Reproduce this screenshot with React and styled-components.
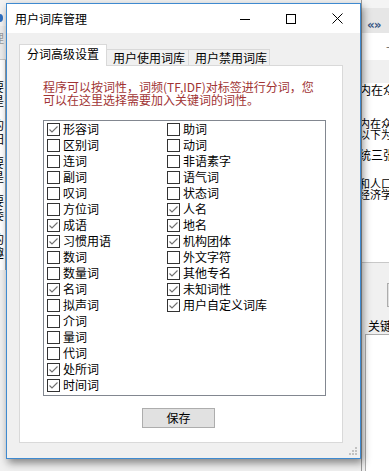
import React from "react";
import styled, { createGlobalStyle } from "styled-components";

const Global = createGlobalStyle`
  html, body { margin: 0; padding: 0; background: #f0f0f0; }
  body { font-family: "Noto Sans CJK SC", "Liberation Sans", sans-serif; font-size: 12px; color: #000; }
`;

const FONT = `"Noto Sans CJK SC", "Liberation Sans", sans-serif`;

const Desktop = styled.div`
  width: 389px;
  height: 471px;
  display: flex;
  overflow: hidden;
  background: #f0f0f0;
  font-family: ${FONT};
`;

/* ---------- background app strips ---------- */
const LeftStrip = styled.div`
  width: 6px;
  flex: none;
  display: flex;
  flex-direction: column;
  overflow: hidden;
`;

const StripBand = styled.div`
  height: ${(p) => p.h}px;
  flex: none;
  background: ${(p) => p.bg || "#f0f0f0"};
  border-bottom: ${(p) => (p.line ? "1px solid #c8c8c8" : "none")};
  border-right: ${(p) => (p.rline ? "1px solid #a0a0a0" : "none")};
  box-sizing: border-box;
  display: flex;
  flex-direction: column;
  overflow: hidden;
`;

const BlueDot = styled.span`
  display: block;
  width: 6px;
  height: 8px;
  margin: 14px 0 0 -3px;
  border-radius: 50%;
  background: #2f6fc0;
`;

const ClipText = styled.span`
  display: block;
  white-space: nowrap;
  font-size: ${(p) => p.fs || 12}px;
  line-height: ${(p) => p.lh || 13}px;
  color: ${(p) => p.color || "#000"};
  margin-left: ${(p) => p.ml || 0}px;
  margin-top: ${(p) => p.mt || 0}px;
`;

const RightStrip = styled.div`
  flex: 1;
  min-width: 0;
  display: flex;
  flex-direction: column;
  overflow: hidden;
  border-left: 1px solid #9a9a9a;
`;

const HeaderIcon = styled.span`
  display: block;
  margin: 11px 0 0 5px;
  font-family: "DejaVu Sans", sans-serif;
  font-size: 12px;
  line-height: 12px;
  font-weight: bold;
  color: #3c5a86;
  letter-spacing: -1px;
`;

const EdgeBox = styled.div`
  height: ${(p) => p.h}px;
  margin: ${(p) => p.m};
  border: 1px solid #adadad;
  border-right: none;
  background: ${(p) => p.bg || "#fff"};
  flex: none;
`;

/* ---------- dialog ---------- */
const Dialog = styled.div`
  position: relative;
  z-index: 1;
  flex: none;
  width: 355px;
  height: 456px;
  margin-top: 3px;
  box-sizing: border-box;
  border: 1px solid #3f8ad0;
  background: #f0f0f0;
  display: flex;
  flex-direction: column;
  box-shadow: 2px 4px 8px rgba(0, 0, 0, 0.45);
`;

const TitleBar = styled.div`
  height: 29px;
  flex: none;
  background: #fff;
  display: flex;
  align-items: center;
`;

const Title = styled.span`
  flex: 1;
  padding-left: 8px;
  font-size: 12px;
  line-height: 14px;
  margin-top: 1px;
`;

const CaptionButton = styled.span`
  width: 46px;
  height: 29px;
  display: flex;
  align-items: center;
  justify-content: center;
`;

const Client = styled.div`
  flex: 1;
  display: flex;
  flex-direction: column;
  padding: 12px 17px 15px 12px;
  min-height: 0;
`;

const TabRow = styled.div`
  display: flex;
  align-items: flex-end;
  height: 21px;
  flex: none;
  position: relative;
  z-index: 1;
  margin-bottom: -1px;
`;

const Tab = styled.div`
  box-sizing: border-box;
  height: ${(p) => (p.active ? 22 : 17)}px;
  width: ${(p) => p.w}px;
  background: ${(p) => (p.active ? "#fff" : "#f0f0f0")};
  border: 1px solid #d9d9d9;
  border-bottom: ${(p) => (p.active ? "none" : "1px solid #d9d9d9")};
  border-left: ${(p) => (p.first || p.active ? "1px solid #d9d9d9" : "none")};
  display: flex;
  align-items: ${(p) => (p.active ? "flex-start" : "center")};
  padding-left: ${(p) => (p.active ? 7 : 6)}px;
  padding-top: ${(p) => (p.active ? 2 : 0)}px;
  font-size: 12px;
  line-height: 14px;
  white-space: nowrap;
`;

const Panel = styled.div`
  flex: 1;
  background: #fff;
  border: 1px solid #d9d9d9;
  padding: 14px 0 0 23px;
  display: flex;
  flex-direction: column;
  align-items: flex-start;
`;

const Hint = styled.p`
  margin: 0;
  font-size: 12px;
  line-height: 13px;
  color: #a13434;
  white-space: nowrap;
`;

const ListBox = styled.div`
  margin-top: 14px;
  width: 283px;
  height: 276px;
  box-sizing: border-box;
  border: 1px solid #828790;
  background: #fff;
  display: flex;
  padding: 0 0 0 3px;
`;

const Column = styled.div`
  width: 120px;
  display: flex;
  flex-direction: column;
`;

const Row = styled.label`
  height: 16px;
  display: flex;
  align-items: center;
  gap: 3px;
  font-size: 12px;
  line-height: 16px;
  white-space: nowrap;
`;

const Box = styled.span`
  width: 13px;
  height: 13px;
  box-sizing: border-box;
  border: 1px solid #333;
  background: #fff;
  flex: none;
  display: flex;
`;

const SaveButton = styled.button`
  margin: 12px 0 0 99px;
  width: 73px;
  height: 20px;
  box-sizing: border-box;
  border: 1px solid #adadad;
  background: #e1e1e1;
  font-family: ${FONT};
  font-size: 12px;
  line-height: 14px;
  padding: 0;
  color: #000;
`;

const Grip = styled.svg`
  position: absolute;
  right: 3px;
  bottom: 3px;
`;

const leftItems = [
  ["形容词", true],
  ["区别词", false],
  ["连词", false],
  ["副词", false],
  ["叹词", false],
  ["方位词", false],
  ["成语", true],
  ["习惯用语", true],
  ["数词", false],
  ["数量词", false],
  ["名词", true],
  ["拟声词", false],
  ["介词", false],
  ["量词", false],
  ["代词", false],
  ["处所词", true],
  ["时间词", true],
];

const rightItems = [
  ["助词", false],
  ["动词", false],
  ["非语素字", false],
  ["语气词", false],
  ["状态词", false],
  ["人名", true],
  ["地名", true],
  ["机构团体", true],
  ["外文字符", false],
  ["其他专名", true],
  ["未知词性", true],
  ["用户自定义词库", true],
];

function Check({ label, checked }) {
  return (
    <Row>
      <Box>
        {checked && (
          <svg width="11" height="11" viewBox="0 0 11 11">
            <polyline points="1.5,5.5 4,8 9.5,2.5" fill="none" stroke="#6f6f6f" strokeWidth="1.1" />
          </svg>
        )}
      </Box>
      <span>{label}</span>
    </Row>
  );
}

export default function App() {
  return (
    <>
      <Global />
      <Desktop>
        <LeftStrip>
          <StripBand h={26} bg="#f2f2f2">
            <BlueDot />
          </StripBand>
          <StripBand h={34} bg="#ececec" line>
            <ClipText color="#9a9a9a" ml={-8} mt={5}>理</ClipText>
          </StripBand>
          <StripBand h={210} bg="#fff" rline>
            <ClipText ml={-8} mt={20} lh={14}>要</ClipText>
            <ClipText ml={-8} lh={14}>是</ClipText>
            <ClipText ml={-8} mt={10} lh={14}>的</ClipText>
            <ClipText ml={-8} lh={14}>阳</ClipText>
            <ClipText ml={-8} mt={10} lh={14}>要</ClipText>
            <ClipText ml={-8} lh={14}>是</ClipText>
            <ClipText ml={-8} mt={10} lh={14}>要</ClipText>
            <ClipText ml={-8} lh={14}>委</ClipText>
            <ClipText ml={-8} mt={10} lh={14}>的</ClipText>
            <ClipText ml={-8} lh={14}>趣</ClipText>
          </StripBand>
          <StripBand h={201} bg="#f0f0f0" />
        </LeftStrip>

        <Dialog>
          <TitleBar>
            <Title>用户词库管理</Title>
            <CaptionButton>
              <svg width="10" height="10" viewBox="0 0 10 10">
                <line x1="0" y1="5.5" x2="10" y2="5.5" stroke="#000" strokeWidth="1" />
              </svg>
            </CaptionButton>
            <CaptionButton>
              <svg width="10" height="10" viewBox="0 0 10 10">
                <rect x="0.5" y="0.5" width="9" height="9" fill="none" stroke="#000" strokeWidth="1" />
              </svg>
            </CaptionButton>
            <CaptionButton>
              <svg width="11" height="11" viewBox="0 0 11 11">
                <line x1="0.5" y1="0.5" x2="10.5" y2="10.5" stroke="#000" strokeWidth="1" />
                <line x1="10.5" y1="0.5" x2="0.5" y2="10.5" stroke="#000" strokeWidth="1" />
              </svg>
            </CaptionButton>
          </TitleBar>
          <Client>
            <TabRow>
              <Tab active first w={88}>分词高级设置</Tab>
              <Tab w={82}>用户使用词库</Tab>
              <Tab w={81}>用户禁用词库</Tab>
            </TabRow>
            <Panel>
              <Hint>程序可以按词性，词频(TF,IDF)对标签进行分词，您</Hint>
              <Hint>可以在这里选择需要加入关键词的词性。</Hint>
              <ListBox>
                <Column>
                  {leftItems.map(([l, c]) => (
                    <Check key={l} label={l} checked={c} />
                  ))}
                </Column>
                <Column>
                  {rightItems.map(([l, c]) => (
                    <Check key={l} label={l} checked={c} />
                  ))}
                </Column>
              </ListBox>
              <SaveButton>保存</SaveButton>
            </Panel>
          </Client>
          <Grip width="8" height="8" viewBox="0 0 8 8">
            <rect x="6" y="0" width="2" height="2" fill="#c2c2c2" />
            <rect x="3" y="3" width="2" height="2" fill="#c2c2c2" />
            <rect x="6" y="3" width="2" height="2" fill="#c2c2c2" />
            <rect x="0" y="6" width="2" height="2" fill="#c2c2c2" />
            <rect x="3" y="6" width="2" height="2" fill="#c2c2c2" />
            <rect x="6" y="6" width="2" height="2" fill="#c2c2c2" />
          </Grip>
        </Dialog>

        <RightStrip>
          <StripBand h={8} bg="#f4f4f4" />
          <StripBand h={25} bg="#e6e6e6">
            <HeaderIcon>«»</HeaderIcon>
          </StripBand>
          <StripBand h={27} bg="#fff">
            <ClipText ml={24} mt={6} color="#666">-</ClipText>
          </StripBand>
          <StripBand h={23} bg="#f0f0f0" />
          <StripBand h={180} bg="#fff" line>
            <ClipText ml={-3} mt={0}>内在众</ClipText>
            <ClipText ml={-3} mt={22} fs={11} lh={11}>内在众</ClipText>
            <ClipText ml={-3} fs={11} lh={11}>以下为</ClipText>
            <ClipText ml={-3} mt={8}>统三张</ClipText>
            <ClipText ml={-3} mt={17} fs={11} lh={11}>和人口</ClipText>
            <ClipText ml={-3} fs={11} lh={11}>经济学</ClipText>
          </StripBand>
          <StripBand h={208} bg="#f0f0f0">
            <EdgeBox h={22} m="20px 0 0 25px" bg="#e1e1e1" />
            <ClipText ml={6} mt={12}>关键</ClipText>
            <EdgeBox h={160} m="2px 0 0 3px" />
          </StripBand>
        </RightStrip>
      </Desktop>
    </>
  );
}
